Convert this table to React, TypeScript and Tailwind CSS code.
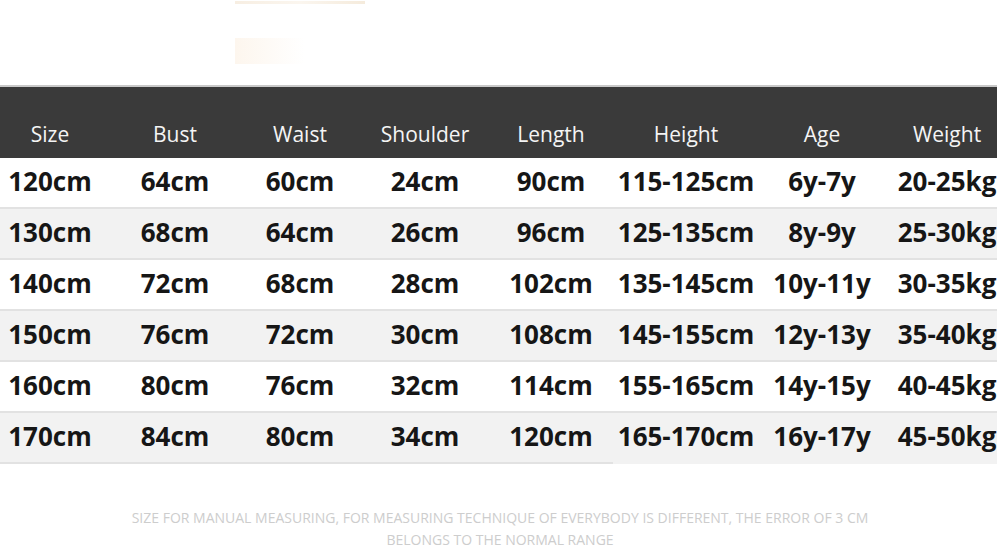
import React from 'react';

const HEADERS = ['Size', 'Bust', 'Waist', 'Shoulder', 'Length', 'Height', 'Age', 'Weight'];

const ROWS = [
  ['120cm', '64cm', '60cm', '24cm', '90cm', '115-125cm', '6y-7y', '20-25kg'],
  ['130cm', '68cm', '64cm', '26cm', '96cm', '125-135cm', '8y-9y', '25-30kg'],
  ['140cm', '72cm', '68cm', '28cm', '102cm', '135-145cm', '10y-11y', '30-35kg'],
  ['150cm', '76cm', '72cm', '30cm', '108cm', '145-155cm', '12y-13y', '35-40kg'],
  ['160cm', '80cm', '76cm', '32cm', '114cm', '155-165cm', '14y-15y', '40-45kg'],
  ['170cm', '84cm', '80cm', '34cm', '120cm', '165-170cm', '16y-17y', '45-50kg'],
];

// column widths in px, centres line up with the reference
const cols = 'grid grid-cols-[100px_150px_100px_150px_102px_168px_104px_146px] w-[1020px]';

const App: React.FC = () => {
  return (
    <div className="w-[1000px] h-[550px] bg-white overflow-hidden font-['Open_Sans','Liberation_Sans',sans-serif]">
      {/* faint leftover of the product photo above the chart */}
      <div className="h-[84px] pl-[235px]">
        <div className="w-[130px] h-[3px] mt-[1px] bg-gradient-to-r from-[#f7eee2] via-[#fbf6ef] to-[#f5ebdc]" />
        <div className="w-[70px] h-[26px] mt-[34px] bg-gradient-to-r from-[#fdf6ee] to-white" />
      </div>

      <div className="w-[997px] overflow-hidden">
        {/* Header */}
        <div className="border-t-2 border-[#c9c9c9] bg-[#3a3a3a]">
          <div className={`${cols} h-[71px] items-end pb-[13px]`}>
            {HEADERS.map(h => (
              <div key={h} className="text-center text-[21px] text-[#f4f4f4] leading-none">
                {h}
              </div>
            ))}
          </div>
        </div>

        {/* Rows */}
        {ROWS.map((row, i) => {
          const shaded = i % 2 === 1;
          const last = i === ROWS.length - 1;
          return (
            <div key={row[0]} className={`relative ${shaded ? 'bg-[#f2f2f2]' : 'bg-white'}`}>
              <div className={`${cols} h-[49px] items-center pb-[3px]`}>
                {row.map((cell, j) => (
                  <div key={j} className="text-center text-[26px] font-bold text-[#161616] leading-none">
                    {cell}
                  </div>
                ))}
              </div>
              {/* row separator; the last row's lines stop short */}
              <div className={`h-[2px] bg-[#e2e2e2] ${last ? 'w-[613px]' : 'w-full'}`} />
              {last && <div className="absolute top-[-2px] left-0 h-[2px] w-[613px] bg-[#e2e2e2]" />}
            </div>
          );
        })}
      </div>

      {/* Footnote */}
      <div className="mt-[43px] text-center text-[14px] leading-[22px] text-[#cdcdcd] font-['Open_Sans',sans-serif]">
        <div>SIZE FOR MANUAL MEASURING, FOR MEASURING TECHNIQUE OF EVERYBODY IS DIFFERENT, THE ERROR OF 3 CM</div>
        <div>BELONGS TO THE NORMAL RANGE</div>
      </div>
    </div>
  );
};

export default App;
